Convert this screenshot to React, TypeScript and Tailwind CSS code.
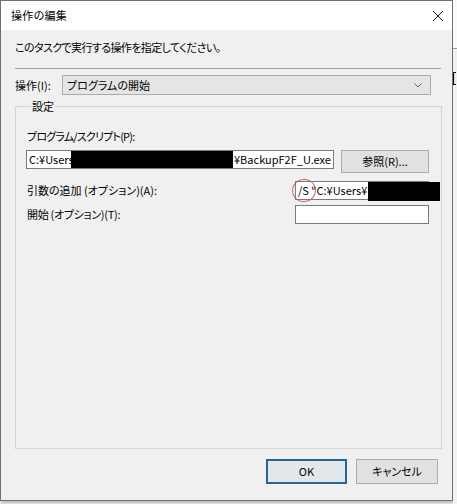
import React from "react"

const font = "font-['Noto_Sans_CJK_JP','Noto_Sans',sans-serif] [font-feature-settings:'palt']"

function TextBox({ className = "", children }: { className?: string; children?: React.ReactNode }) {
  return (
    <div
      className={`relative flex h-[19px] items-center overflow-hidden border border-[#7a7a7a] bg-white pl-[2px] text-[11px] leading-none ${className}`}
    >
      {children}
    </div>
  )
}

export default function App() {
  return (
    <div className={`flex h-[504px] w-[457px] bg-[#f3f3f3] text-black ${font}`}>
      {/* dialog window */}
      <div className="flex h-[501px] w-[453px] flex-col border border-[#707070] bg-[#f0f0f0] shadow-[1px_2px_3px_rgba(0,0,0,0.25)]">
        {/* title bar */}
        <div className="flex h-[29px] items-center justify-between bg-white pl-[10px] pr-[7px]">
          <span className="text-[11px] tracking-[0.3px]">操作の編集</span>
          <svg width="12" height="12" viewBox="0 0 12 12" className="mr-[1px]">
            <path d="M1 1 L11 11 M11 1 L1 11" stroke="#111" strokeWidth="1" fill="none" />
          </svg>
        </div>

        <div className="flex flex-1 flex-col pl-[14px] pr-[10px] text-[11px]">
          <p className="mt-[9px] leading-[16px] tracking-[-0.6px]">このタスクで実行する操作を指定してください。</p>
          <div className="mt-[13px] mr-[1px] border-t border-[#a0a0a0]" />

          {/* action combobox */}
          <div className="mt-[6px] flex items-center">
            <span className="w-[47px]">操作(I):</span>
            <div className="mr-[11px] flex h-[20px] flex-1 items-center justify-between border border-[#acacac] bg-[#e5e5e5] pl-[4px] pr-[8px]">
              <span className="leading-none">プログラムの開始</span>
              <svg width="8" height="5" viewBox="0 0 8 5">
                <polyline points="0.5,0.5 4,4 7.5,0.5" stroke="#606060" strokeWidth="1" fill="none" />
              </svg>
            </div>
          </div>

          {/* settings group */}
          <fieldset className="mt-[3px] h-[351px] border border-[#d5d5d5] pl-[10px] pr-[12px]">
            <legend className="ml-[5px] px-[1px] leading-[16px]">設定</legend>

            <p className="mt-[14px] pl-[1px] leading-[16px] tracking-[-0.8px]">プログラム/スクリプト(P):</p>
            <div className="mt-[6px] flex items-start justify-between">
              <TextBox className="w-[308px]">
                <span className="w-[42px] shrink-0 whitespace-nowrap">C:¥Users</span>
                <div className="h-full w-[162px] shrink-0 bg-black" />
                <span className="whitespace-nowrap pl-[1px]">¥BackupF2F_U.exe</span>
              </TextBox>
              <button className="h-[23px] w-[88px] border border-[#adadad] bg-[#e1e1e1] leading-none">
                参照(R)...
              </button>
            </div>

            <div className="mt-[8px] flex items-center justify-between">
              <span className="pl-[1px]">引数の追加 (オプション)(A):</span>
              <div className="relative">
                <TextBox className="w-[134px]">
                  <span className="whitespace-nowrap">/S "C:¥Users¥</span>
                </TextBox>
                <div className="absolute left-[73px] top-[1px] h-[19px] w-[72px] bg-black" />
                <div className="absolute -left-[3px] -top-[2px] h-[23px] w-[24px] rotate-[-12deg] rounded-full border border-[#c65a5f]/80" />
              </div>
            </div>

            <div className="mt-[5px] flex items-center justify-between">
              <span className="pl-[1px] tracking-[-0.3px]">開始 (オプション)(T):</span>
              <TextBox className="w-[134px]" />
            </div>
          </fieldset>

          {/* buttons */}
          <div className="mt-[10px] flex justify-end gap-[9px] pr-[4px]">
            <button className="h-[25px] w-[81px] border-2 border-[#2a6496] bg-[#e2e7ec]">OK</button>
            <button className="h-[25px] w-[82px] border border-[#adadad] bg-[#e1e1e1]">キャンセル</button>
          </div>
        </div>
      </div>

      {/* sliver of what lies behind the dialog */}
      <div className="flex flex-1 flex-col">
        <div className="h-[48px] bg-[#fbfbfb]" />
        <div className="h-[24px] border-t border-[#9a9a9a] bg-[#f0f0f0]" />
        <div className="h-[13px] w-[3px] border-y border-l border-black" />
        <div className="flex-1 bg-[#f2f2f2]" />
      </div>
    </div>
  )
}
